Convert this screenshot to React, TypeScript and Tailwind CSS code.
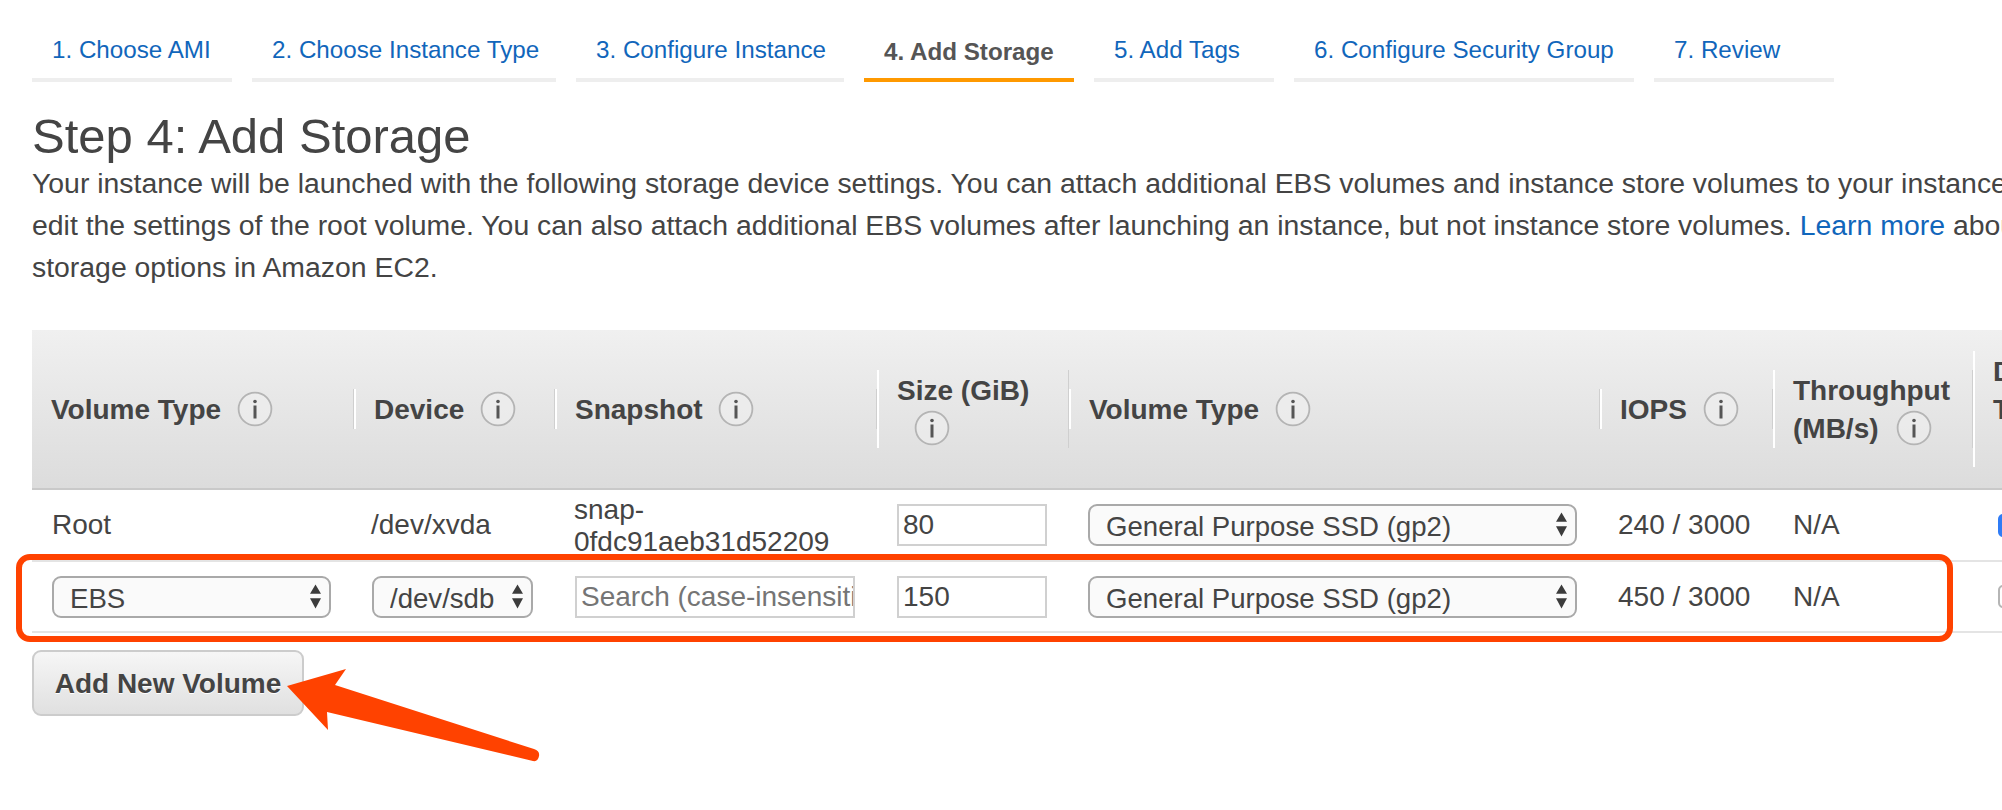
const TABS = [
  { label: '1. Choose AMI', width: 'w-[200px]' },
  { label: '2. Choose Instance Type', width: 'w-[304px]' },
  { label: '3. Configure Instance', width: 'w-[268px]' },
  { label: '4. Add Storage', width: 'w-[210px]', active: true },
  { label: '5. Add Tags', width: 'w-[180px]' },
  { label: '6. Configure Security Group', width: 'w-[340px]' },
  { label: '7. Review', width: 'w-[180px]' },
];

const COLS = 'grid grid-cols-[322px_201px_322px_192px_531px_173px_200px_200px]';
const HEAD_DIVIDER = 'border-l-2 border-l-white border-r border-r-[#cfcfcf]';

function Info() {
  return (
    <svg width="36" height="36" viewBox="0 0 36 36" className="inline-block shrink-0 align-[-8px]">
      <circle cx="18" cy="18" r="16.4" fill="#f2f2f2" fillOpacity="0.5" stroke="#b4b4b4" strokeWidth="1.8" />
      <circle cx="18" cy="10.5" r="1.8" fill="#555" />
      <rect x="16.5" y="14.5" width="3" height="13" fill="#555" />
    </svg>
  );
}

function Select({ value, className }: { value: string; className: string }) {
  return (
    <div className={`relative h-[42px] ${className}`}>
      <select
        defaultValue={value}
        className="h-full w-full appearance-none rounded-[9px] border-2 border-[#a9a9a9] bg-[#fafafa] pl-[16px] text-[27.6px] text-[#444] outline-none"
      >
        <option>{value}</option>
      </select>
      <svg width="11" height="25" viewBox="0 0 12 26" className="absolute right-[10px] top-[8px]">
        <path d="M6 0 L12 10 L0 10 Z M0 15 L12 15 L6 26 Z" fill="#3c3c3c" />
      </svg>
    </div>
  );
}

function TextInput({ value, placeholder, className }: { value?: string; placeholder?: string; className: string }) {
  return (
    <input
      readOnly
      value={value}
      placeholder={placeholder}
      className={`h-[42px] border-2 border-[#d0d0d0] bg-white pl-[4px] text-[#444] outline-none placeholder:text-[#757575] ${className}`}
    />
  );
}

function HeadCell({ children, first }: { children: React.ReactNode; first?: boolean }) {
  return (
    <div className="flex items-center">
      <div className={`w-full ${first ? 'border-r border-r-[#cfcfcf] pl-[19px]' : `${HEAD_DIVIDER} pl-[18px]`} pr-[4px] pt-[2px] font-bold leading-[38px] whitespace-nowrap`}>
        {children}
      </div>
    </div>
  );
}

export default function App() {
  return (
    <div className="relative h-[810px] w-[2002px] overflow-hidden bg-white pt-[34px] font-['Liberation_Sans',Arial,sans-serif] text-[28px] text-[#444]">
      {/* Wizard tabs */}
      <div className="flex gap-[20px] pl-[32px] text-[24.2px]">
        {TABS.map((tab) => (
          <div
            key={tab.label}
            className={`${tab.width} border-b-4 pl-[20px] leading-[32px] whitespace-nowrap ${
              tab.active
                ? 'border-[#ff9900] pb-[10px] pt-[2px] font-bold text-[#555]'
                : 'border-[#eeeeee] pb-[12px] text-[#1166bb]'
            }`}
          >
            {tab.label}
          </div>
        ))}
      </div>

      <div className="pl-[32px]">
        <h1 className="mt-[29px] text-[49px] leading-[50px]">Step 4: Add Storage</h1>
        <p className="mt-[1px] text-[28.4px] leading-[42px] whitespace-nowrap">
          <span className="block">
            Your instance will be launched with the following storage device settings. You can attach additional EBS volumes and instance store volumes to your instance, or
          </span>
          <span className="block">
            edit the settings of the root volume. You can also attach additional EBS volumes after launching an instance, but not instance store volumes.
            <span className="mx-[8px] text-[#1166bb]">Learn more</span>
            about
          </span>
          <span className="block">storage options in Amazon EC2.</span>
        </p>

        {/* Volume table */}
        <div className="mt-[42px] w-[2400px]">
          <div className={`${COLS} h-[160px] border-b-2 border-[#c9c9c9] bg-gradient-to-b from-[#f0f0f0] to-[#dcdcdc]`}>
            <HeadCell first>
              Volume Type <span className="ml-[8px]"><Info /></span>
            </HeadCell>
            <HeadCell>
              Device <span className="ml-[8px]"><Info /></span>
            </HeadCell>
            <HeadCell>
              Snapshot <span className="ml-[8px]"><Info /></span>
            </HeadCell>
            <HeadCell>
              Size (GiB)
              <span className="block pl-[17px]"><Info /></span>
            </HeadCell>
            <HeadCell>
              Volume Type <span className="ml-[8px]"><Info /></span>
            </HeadCell>
            <HeadCell>
              IOPS <span className="ml-[8px]"><Info /></span>
            </HeadCell>
            <HeadCell>
              Throughput
              <span className="block">(MB/s) <span className="ml-[10px]"><Info /></span></span>
            </HeadCell>
            <HeadCell>
              Delete on
              <span className="block">Termination</span>
              <span className="block pl-[40px]"><Info /></span>
            </HeadCell>
          </div>

          <div className={`${COLS} h-[72px] items-center border-b-2 border-[#e4e4e4]`}>
            <div className="pl-[20px]">Root</div>
            <div className="pl-[17px]">/dev/xvda</div>
            <div className="pl-[19px] pt-[2px] leading-[32px]">
              <span className="block">snap-</span>
              <span className="block">0fdc91aeb31d52209</span>
            </div>
            <div className="pl-[20px]">
              <TextInput value="80" className="w-[150px]" />
            </div>
            <div className="pl-[19px]">
              <Select value="General Purpose SSD (gp2)" className="w-[489px]" />
            </div>
            <div className="pl-[18px]">240 / 3000</div>
            <div className="pl-[20px]">N/A</div>
            <div className="pl-[25px]">
              <div className="h-[23px] w-[23px] rounded-[5px] bg-[#2f7cf6]" />
            </div>
          </div>

          <div className={`${COLS} h-[71px] items-center border-b-2 border-[#e4e4e4]`}>
            <div className="pl-[20px]">
              <Select value="EBS" className="w-[279px]" />
            </div>
            <div className="pl-[18px]">
              <Select value="/dev/sdb" className="w-[161px]" />
            </div>
            <div className="pl-[20px]">
              <TextInput placeholder="Search (case-insensitive)" className="w-[280px]" />
            </div>
            <div className="pl-[20px]">
              <TextInput value="150" className="w-[150px]" />
            </div>
            <div className="pl-[19px]">
              <Select value="General Purpose SSD (gp2)" className="w-[489px]" />
            </div>
            <div className="pl-[18px]">450 / 3000</div>
            <div className="pl-[20px]">N/A</div>
            <div className="pl-[25px]">
              <div className="h-[23px] w-[23px] rounded-[5px] border-2 border-[#b5b5b5] bg-white" />
            </div>
          </div>
        </div>

        <button className="mt-[17px] h-[66px] w-[272px] rounded-[9px] border-2 border-[#cccccc] bg-gradient-to-b from-[#f6f6f6] to-[#e0e0e0] pt-[2px] font-bold text-[#444] [text-shadow:0_1px_0_#fff]">
          Add New Volume
        </button>
      </div>

      {/* Annotation: red box round the new row, arrow at the button */}
      <div className="absolute left-[16px] top-[554px] h-[88px] w-[1937px] rounded-[14px] border-[6px] border-[#ff4200]" />
      <svg className="absolute left-0 top-0" width="2002" height="810">
        <path
          d="M287 686 L346 669 L335 685 L534 749 Q540 751 539 756 Q538 762 533 761 L327 712 L328 730 Z"
          fill="#ff4200"
        />
      </svg>
    </div>
  );
}
